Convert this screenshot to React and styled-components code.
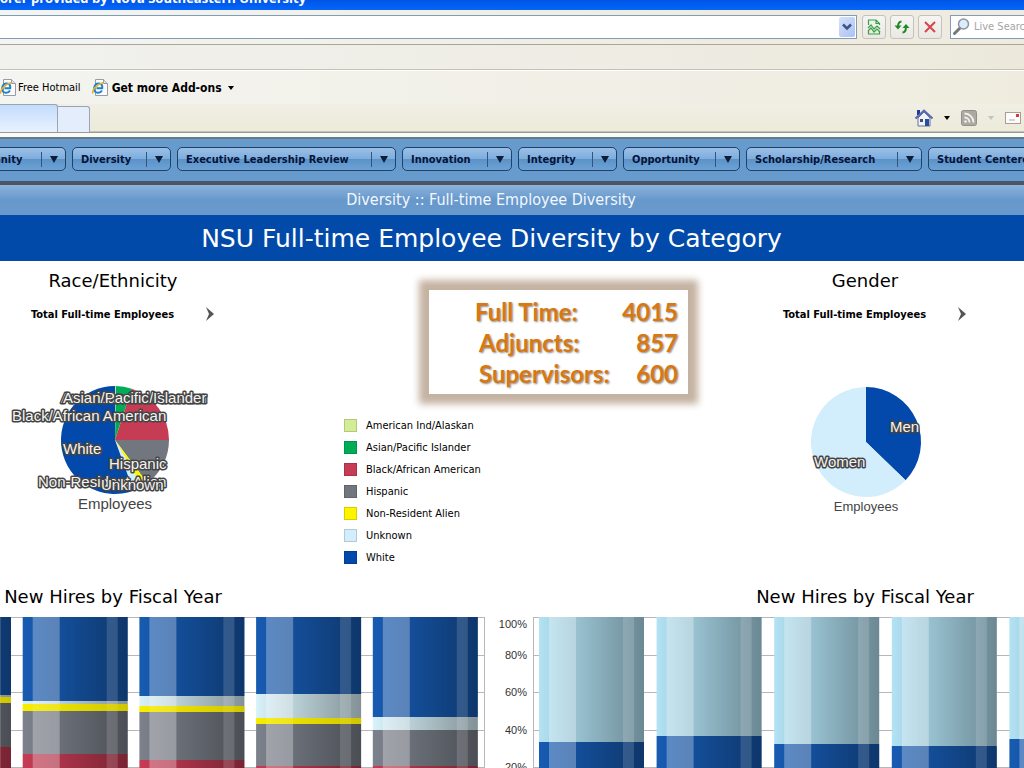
import React from 'react';
import styled, { createGlobalStyle } from 'styled-components';

const menuItems = [
    { label: 'Community', width: 116 },
    { label: 'Diversity', width: 99 },
    { label: 'Executive Leadership Review', width: 219 },
    { label: 'Innovation', width: 110 },
    { label: 'Integrity', width: 99 },
    { label: 'Opportunity', width: 117 },
    { label: 'Scholarship/Research', width: 176 },
    { label: 'Student Centered', width: 150 },
];

const totals = [
    { label: 'Full Time:', value: 4015, indent: 46 },
    { label: 'Adjuncts:', value: 857, indent: 50 },
    { label: 'Supervisors:', value: 600, indent: 50 },
];

const colors = {
    native: '#d3ec96',
    asian: '#00ad56',
    black: '#c63c55',
    hispanic: '#71767f',
    alien: '#fdf500',
    unknown: '#d2edfc',
    white: '#0249ab',
};

const legendItems = [
    { label: 'American Ind/Alaskan', color: colors.native },
    { label: 'Asian/Pacific Islander', color: colors.asian },
    { label: 'Black/African American', color: colors.black },
    { label: 'Hispanic', color: colors.hispanic },
    { label: 'Non-Resident Alien', color: colors.alien },
    { label: 'Unknown', color: colors.unknown },
    { label: 'White', color: colors.white },
];

const raceSlices = [
    { from: 0, to: 1, color: colors.native },
    { from: 1, to: 18, color: colors.asian },
    { from: 18, to: 90, color: colors.black },
    { from: 90, to: 143, color: colors.hispanic },
    { from: 143, to: 150, color: colors.alien },
    { from: 150, to: 160, color: colors.unknown },
    { from: 160, to: 360, color: colors.white },
];

const raceLabels = [
    { text: 'American Ind/Alaskan', x: 61, y: 23 },
    { text: 'Asian/Pacific Islander', x: 63, y: 23 },
    { text: 'Black/African American', x: 12, y: 41 },
    { text: 'Hispanic', x: 109, y: 89 },
    { text: 'Non-Resident Alien', x: 38, y: 107 },
    { text: 'Unknown', x: 101, y: 110 },
    { text: 'White', x: 63, y: 74 },
];

const genderSlices = [
    { from: 0, to: 134, color: colors.white },
    { from: 134, to: 360, color: colors.unknown },
];

const genderLabels = [
    { text: 'Men', x: 138, y: 52 },
    { text: 'Women', x: 62, y: 87 },
];

// each bar lists its segments from the top down: [colour, lower edge]
const raceBars = [
    [['white', 78], ['unknown', 80], ['alien', 86], ['hispanic', 130], ['black', 187]],
    [['white', 84], ['unknown', 87], ['alien', 94], ['hispanic', 137], ['black', 187]],
    [['white', 79], ['unknown', 89], ['alien', 95], ['hispanic', 143], ['black', 187]],
    [['white', 77], ['unknown', 101], ['alien', 107], ['hispanic', 149], ['black', 187]],
    [['white', 100], ['unknown', 113], ['hispanic', 149], ['black', 187]],
];

const genderBars = [
    [['women', 125], ['white', 187]],
    [['women', 119], ['white', 187]],
    [['women', 127], ['white', 187]],
    [['women', 129], ['white', 187]],
    [['women', 122], ['white', 187]],
];

const barColors = { ...colors, white: '#175bb2', unknown: '#d8f2fa', women: '#b2e2f4', hispanic: '#7c818b' };

const slicePath = (cx, cy, r, from, to) => {
    const point = (deg) => {
        const a = ((deg - 90) * Math.PI) / 180;
        return `${cx + r * Math.cos(a)} ${cy + r * Math.sin(a)}`;
    };
    return `M${cx} ${cy} L${point(from)} A${r} ${r} 0 ${to - from > 180 ? 1 : 0} 1 ${point(to)} Z`;
};

const Pie = ({ cx, cy, r, slices, labels, caption, captionSize, captionY }) => (
    <PieSvg viewBox="0 0 226 135" role="img" aria-label={caption}>
        {slices.map((s) => (
            <path key={s.from} d={slicePath(cx, cy, r, s.from, s.to)} fill={s.color} />
        ))}
        {labels.map((l) => (
            <PieLabel key={l.text} x={l.x} y={l.y}>{l.text}</PieLabel>
        ))}
        <PieCaption x={cx} y={captionY} $size={captionSize}>{caption}</PieCaption>
    </PieSvg>
);

const Bars = ({ bars, start, step }) => (
    <>
        {bars.map((segments, i) => {
            const x = start + i * step;
            const blocks = segments.map(([name, bottom], j) => {
                const top = j === 0 ? 0 : segments[j - 1][1];
                return { name, top, height: bottom - top };
            });
            const alien = blocks.find((b) => b.name === 'alien');
            return (
                <g key={i}>
                    {blocks.map((b) => (
                        <rect key={b.name} x={x} y={b.top} width="105" height={b.height} fill={barColors[b.name]} />
                    ))}
                    <rect x={x} y="0" width="105" height="187" fill="url(#shade)" />
                    <rect x={x + 10} y="0" width="27" height="187" fill="#fff" opacity="0.3" />
                    <rect x={x + 84} y="0" width="11" height="187" fill="#fff" opacity="0.15" />
                    {alien && <rect x={x} y={alien.top} width="105" height={alien.height} fill="#f5e800" opacity="0.6" />}
                </g>
            );
        })}
    </>
);

const gridLines = [0, 38, 75, 113, 150, 187];

const PageIcon = () => (
    <svg width="16" height="17" viewBox="0 0 16 17">
        <path d="M3.500 .5h8l4 4v12h-12z" fill="#fbfbfd" stroke="#9a9aa4" />
        <path d="M11.500 .5v4h4" fill="#dcdce4" stroke="#9a9aa4" />
        <path d="M10 11.500c-1 1.700-2.500 2.500-4.500 2.300C3 13.500 1.800 11.600 2.200 9 2.600 6.300 4.600 4.400 7 4.500c2.500.1 3.700 2 3.200 4.800H4.500" fill="none" stroke="#1d83c8" strokeWidth="2" />
        <path d="M1 14.500C-.6 12 4 5.500 11.500 3.500" fill="none" stroke="#e5b12d" strokeWidth="1.500" />
    </svg>
);

const NextArrow = () => (
    <svg width="8" height="14" viewBox="0 0 8 14"><path d="M0 0l8 7-8 7 3-7z" fill="#555" /></svg>
);

const App = () => {
    return (
        <Page>
            <GlobalStyle />
            <TitleBar>orer provided by Nova Southeastern University</TitleBar>
            <AddressRow>
                <AddressBox>
                    <AddressInput aria-label="Address" />
                    <DropButton aria-label="Show addresses">
                        <svg width="10" height="8" viewBox="0 0 10 8"><path d="M1 1.500l4 4 4-4" fill="none" stroke="#40547c" strokeWidth="2.500" /></svg>
                    </DropButton>
                </AddressBox>
                <ToolButton aria-label="Compatibility view">
                    <svg width="14" height="16" viewBox="0 0 14 16" fill="none" stroke="#36a045" strokeWidth="1.200">
                        <path d="M1.500 6V1h7.500l3.500 3.500V6M9 1v3.500h3.500M1.500 12v3h11v-3" />
                        <path d="M1 9l3-3 3 4 3-3 3 3M1 12l3-3 3 4 3-3 3 3" />
                    </svg>
                </ToolButton>
                <ToolButton aria-label="Refresh">
                    <svg width="16" height="14" viewBox="0 0 16 14" fill="none" stroke="#1e8a25" strokeWidth="2">
                        <path d="M7.500 1.500C5 1.500 4 3 4 7M8.500 12.500c2.500 0 3.500-2 3.500-6" />
                        <path d="M.5 5.500h7L4 9.500zM8.500 8h7L12 4z" fill="#1e8a25" stroke="none" />
                    </svg>
                </ToolButton>
                <ToolButton aria-label="Stop">
                    <svg width="12" height="12" viewBox="0 0 12 12"><path d="M1 1l10 10M11 1L1 11" stroke="#d9434b" strokeWidth="2" /></svg>
                </ToolButton>
                <SearchBox>
                    <svg width="17" height="17" viewBox="0 0 17 17">
                        <path d="M7 10L1.500 15.500" stroke="#777" strokeWidth="3" strokeLinecap="round" />
                        <circle cx="10.500" cy="6" r="5" fill="#dcecf8" stroke="#8c93a3" strokeWidth="1.500" />
                    </svg>
                    <SearchInput aria-label="Live Search" placeholder="Live Search" />
                </SearchBox>
            </AddressRow>
            <MenuRow />
            <FavoritesRow>
                <Favorite href="#"><PageIcon />Free Hotmail</Favorite>
                <Favorite href="#" $bold><PageIcon />Get more Add-ons<Caret /></Favorite>
            </FavoritesRow>
            <TabRow>
                <Tab $active aria-label="Current tab" />
                <Tab aria-label="New tab" />
                <PageTools>
                    <IconButton aria-label="Home">
                        <svg width="18" height="18" viewBox="0 0 18 18">
                            <path d="M3 9v8h12V9L9 3z" fill="#eef2fa" stroke="#65729a" />
                            <path d="M2 1h3v5H2z" fill="#2736a8" />
                            <path d="M.5 9.500L9 1.500l8.500 8" fill="none" stroke="#596ba8" strokeWidth="2" />
                            <path d="M5 10h3v3H5z" fill="#4a4f60" />
                            <path d="M10 10h4v7h-4z" fill="#244f9b" />
                        </svg>
                    </IconButton>
                    <Caret />
                    <IconButton aria-label="Feeds">
                        <svg width="16" height="16" viewBox="0 0 16 16">
                            <rect x=".5" y=".5" width="15" height="15" rx="2" fill="#aaa9a2" stroke="#908f88" />
                            <path d="M3.500 3.500a9 9 0 0 1 9 9M3.500 7.500a5 5 0 0 1 5 5" fill="none" stroke="#f2f1ea" strokeWidth="1.800" />
                            <circle cx="4.500" cy="11.500" r="1.300" fill="#f2f1ea" />
                        </svg>
                    </IconButton>
                    <Caret $faded />
                    <IconButton aria-label="Read mail">
                        <svg width="16" height="12" viewBox="0 0 16 12">
                            <rect x=".5" y=".5" width="15" height="11" fill="#fdfcfa" stroke="#b09a94" />
                            <path d="M11 2h3v3h-3z" fill="#d8383d" />
                            <path d="M4 8h6" stroke="#a9a9b0" />
                        </svg>
                    </IconButton>
                </PageTools>
            </TabRow>
            <Nav>
                {menuItems.map((item) => (
                    <NavButton key={item.label} $width={item.width}>
                        <NavLabel>{item.label}</NavLabel>
                        <NavArrow>
                            <svg width="8" height="7" viewBox="0 0 8 7"><path d="M0 0h8L4 7z" fill="#0d1c38" /></svg>
                        </NavArrow>
                    </NavButton>
                ))}
            </Nav>
            <Breadcrumb>Diversity :: Full-time Employee Diversity</Breadcrumb>
            <PageTitle>NSU Full-time Employee Diversity by Category</PageTitle>
            <Summary>
                <Section>
                    <SectionTitle>Race/Ethnicity</SectionTitle>
                    <Filter>
                        Total Full-time Employees
                        <NextArrow />
                    </Filter>
                    <Pie cx={115} cy={60} r={54} slices={raceSlices} labels={raceLabels} caption="Employees" captionSize={15} captionY={129} />
                    <ChartTitle>New Hires by Fiscal Year</ChartTitle>
                </Section>
                <Middle>
                    <TotalsBox>
                        {totals.map((t) => (
                            <TotalRow key={t.label} $indent={t.indent}>
                                <span>{t.label}</span>
                                <span>{t.value}</span>
                            </TotalRow>
                        ))}
                    </TotalsBox>
                    <Legend>
                        {legendItems.map((item) => (
                            <LegendItem key={item.label}>
                                <Swatch $color={item.color} />
                                {item.label}
                            </LegendItem>
                        ))}
                    </Legend>
                </Middle>
                <Section>
                    <SectionTitle>Gender</SectionTitle>
                    <Filter>
                        Total Full-time Employees
                        <NextArrow />
                    </Filter>
                    <Pie cx={114} cy={62} r={55} slices={genderSlices} labels={genderLabels} caption="Employees" captionSize={13} captionY={131} />
                    <ChartTitle>New Hires by Fiscal Year</ChartTitle>
                </Section>
            </Summary>
            <Charts>
                <ChartSvg viewBox="0 0 485 188" role="img" aria-label="New hires by race">
                    <defs>
                        <linearGradient id="shade">
                            <stop offset="0" stopColor="#000" stopOpacity="0" />
                            <stop offset="0.35" stopColor="#000" stopOpacity="0.14" />
                            <stop offset="1" stopColor="#000" stopOpacity="0.4" />
                        </linearGradient>
                    </defs>
                    {gridLines.map((y) => <GridLine key={y} x1="0" x2="484" y1={y + 0.5} y2={y + 0.5} />)}
                    <GridLine x1="484.5" x2="484.5" y1="0" y2="188" />
                    <Bars bars={raceBars} start={-94} step={116.7} />
                </ChartSvg>
                <ChartSvg viewBox="0 0 539 188" role="img" aria-label="New hires by gender">
                    {gridLines.map((y) => <GridLine key={y} x1="48" x2="539" y1={y + 0.5} y2={y + 0.5} />)}
                    <GridLine x1="48.5" x2="48.5" y1="0" y2="188" />
                    <AxisLabel x="42" y="11">100%</AxisLabel>
                    <AxisLabel x="42" y="42">80%</AxisLabel>
                    <AxisLabel x="42" y="79">60%</AxisLabel>
                    <AxisLabel x="42" y="117">40%</AxisLabel>
                    <AxisLabel x="42" y="154">20%</AxisLabel>
                    <Bars bars={genderBars} start={54} step={117.6} />
                </ChartSvg>
            </Charts>
        </Page>
    );
};

export default App;

const GlobalStyle = createGlobalStyle`
    * {
        box-sizing: border-box;
    }
    body {
        margin: 0;
        background: #fff;
        font-family: "DejaVu Sans Condensed", "DejaVu Sans", sans-serif;
    }
    button, input {
        font-family: inherit;
    }
`;

const Page = styled.div`
    height: 100vh;
    overflow: hidden;
    display: flex;
    flex-direction: column;
    background: #fff;

    > * {
        flex-shrink: 0;
    }
`;

const TitleBar = styled.div`
    height: 10px;
    display: flex;
    align-items: flex-end;
    overflow: hidden;
    background: linear-gradient(#0055e5, #0366fa);
    color: #fff;
    font-family: "Open Sans", sans-serif;
    font-size: 13px;
    font-weight: 700;
    line-height: 24px;
    white-space: nowrap;
`;

const AddressRow = styled.div`
    height: 35px;
    display: flex;
    align-items: center;
    gap: 4px;
    padding-bottom: 1px;
    background: linear-gradient(to right, #f4f4f2, #efecdf 70%);
    border-bottom: 1px solid #a9a597;
`;

const AddressBox = styled.div`
    flex: 1;
    height: 24px;
    display: flex;
    margin-right: 1px;
    padding: 1px;
    background: #fff;
    border: 1px solid #7f9db9;
    border-left: none;
`;

const AddressInput = styled.input`
    flex: 1;
    min-width: 0;
    border: none;
    outline: none;
`;

const DropButton = styled.button`
    width: 16px;
    padding: 0;
    border: none;
    border-radius: 2px;
    background: linear-gradient(135deg, #d5e2fd, #aac1f3);
`;

const ToolButton = styled.button`
    width: 24px;
    height: 24px;
    display: flex;
    align-items: center;
    justify-content: center;
    padding: 0;
    background: linear-gradient(#f6f5f3, #eae8e2);
    border: 1px solid #c2c1c4;
    border-radius: 3px;
`;

const SearchBox = styled.div`
    width: 74px;
    height: 24px;
    display: flex;
    align-items: center;
    gap: 4px;
    margin-left: 4px;
    padding-left: 2px;
    overflow: hidden;
    background: #fff;
    border: 1px solid #7f9db9;
    border-right: none;

    svg {
        flex-shrink: 0;
    }
`;

const SearchInput = styled.input`
    width: 100px;
    flex-shrink: 0;
    padding: 0;
    border: none;
    outline: none;
    font-size: 11px;

    &::placeholder {
        color: #a5a5a5;
        opacity: 1;
    }
`;

const MenuRow = styled.div`
    height: 25px;
    background: linear-gradient(to right, #f1f1ee, #ece9dc);
    border-bottom: 1px solid #c4c2b8;
`;

const FavoritesRow = styled.div`
    height: 34px;
    display: flex;
    align-items: center;
    gap: 11px;
    background: linear-gradient(to right, #f4f4f0, #efecdf);
    border-top: 1px solid #fff;
`;

const Favorite = styled.a`
    display: flex;
    align-items: center;
    gap: ${(props) => (props.$bold ? '4px' : '2px')};
    color: #000;
    font-size: ${(props) => (props.$bold ? '12px' : '11px')};
    font-weight: ${(props) => (props.$bold ? 700 : 400)};
    text-decoration: none;
    white-space: nowrap;
`;

const Caret = styled.span`
    width: 0;
    margin: 0 2px;
    border: 3px solid transparent;
    border-top: 4px solid ${(props) => (props.$faded ? '#c5c3b8' : '#000')};
    border-bottom: none;
`;

const TabRow = styled.div`
    height: 33px;
    display: flex;
    align-items: flex-end;
    padding-bottom: 5px;
    background: linear-gradient(#f1efe5, #ecead9 27px, #9b9b94 28px, #9b9b94 29px, #fafaf6 29px);
`;

const Tab = styled.button`
    width: ${(props) => (props.$active ? '58px' : '32px')};
    height: ${(props) => (props.$active ? '28px' : '26px')};
    background: ${(props) => (props.$active ? 'linear-gradient(#c3dcfc, #e9f2fe)' : '#e3edfb')};
    border: 1px solid #9aa5b4;
    border-bottom: none;
    border-left: none;
    border-radius: 0 3px 0 0;
`;

const PageTools = styled.div`
    display: flex;
    align-items: center;
    gap: 9px;
    margin-left: auto;
    padding: 0 3px 5px 0;
`;

const IconButton = styled.button`
    display: flex;
    padding: 0;
    border: none;
    background: none;
`;

const Nav = styled.nav`
    height: 48px;
    display: flex;
    align-items: center;
    gap: 6px;
    margin-left: -50px;
    padding-bottom: 2px;
    overflow: hidden;
    background: #679acd;
    border-top: 2px solid #667986;
    border-bottom: 4px solid #4c5563;
`;

const NavButton = styled.button`
    width: ${(props) => props.$width}px;
    height: 24px;
    flex-shrink: 0;
    display: flex;
    align-items: center;
    justify-content: space-between;
    padding: 0 7px 0 8px;
    background: linear-gradient(#9bbfe6, #7eaedd 48%, #5b93c8 52%, #6ea2d5);
    border: 1px solid #1f4268;
    border-radius: 5px;
    color: #06123a;
`;

const NavLabel = styled.span`
    font-size: 11px;
    font-weight: 700;
    white-space: nowrap;
`;

const NavArrow = styled.span`
    height: 15px;
    display: flex;
    align-items: center;
    padding-left: 8px;
    border-left: 1px solid #2f5680;
`;

const Breadcrumb = styled.div`
    height: 30px;
    padding-right: 42px;
    background: linear-gradient(#8cb3dc, #6798cc 50%, #6a9acc);
    color: #f3f8fd;
    font-size: 16px;
    line-height: 30px;
    text-align: center;
`;

const PageTitle = styled.h1`
    height: 46px;
    margin: 0;
    padding-right: 41px;
    background: #014aa9;
    color: #fff;
    font-family: "DejaVu Sans", sans-serif;
    font-size: 25px;
    font-weight: 400;
    line-height: 48px;
    text-align: center;
`;

const Summary = styled.div`
    display: grid;
    grid-template-columns: 226fr 480fr 318fr;
`;

const Section = styled.section`
    display: flex;
    flex-direction: column;
    align-items: center;
    padding-top: 9px;
`;

const SectionTitle = styled.h2`
    margin: 0;
    font-family: "DejaVu Sans", sans-serif;
    font-size: 18px;
    font-weight: 400;
    line-height: 22px;
`;

const Filter = styled.button`
    height: 24px;
    display: flex;
    align-items: center;
    gap: 32px;
    margin: 10px 0 54px 19px;
    padding: 0;
    border: none;
    background: none;
    color: #000;
    font-size: 11px;
    font-weight: 700;
    white-space: nowrap;
`;

const PieSvg = styled.svg`
    width: 226px;
    height: 135px;
`;

const PieLabel = styled.text`
    fill: #f4f4f4;
    stroke: #444;
    stroke-width: 3px;
    stroke-linejoin: round;
    paint-order: stroke;
    font-family: "Liberation Sans", Arial, sans-serif;
    font-size: 15px;
`;

const PieCaption = styled.text`
    fill: #444;
    font-family: "Liberation Sans", Arial, sans-serif;
    font-size: ${(props) => props.$size}px;
    text-anchor: middle;
`;

const ChartTitle = styled.h2`
    margin: 71px 0 9px;
    font-family: "DejaVu Sans", sans-serif;
    font-size: 18px;
    font-weight: 400;
    line-height: 22px;
    white-space: nowrap;
`;

const Middle = styled.div`
    display: flex;
    flex-direction: column;
    align-items: flex-start;
    padding-top: 29px;
`;

const TotalsBox = styled.div`
    width: 259px;
    margin-left: 203px;
    padding: 6px 10px 5px 0;
    background: #fff;
    box-shadow: 0 0 7px 10px #c5b3a2;
`;

const TotalRow = styled.div`
    display: flex;
    justify-content: space-between;
    padding-left: ${(props) => props.$indent}px;
    color: #d8780f;
    font-family: Lato, "Open Sans", sans-serif;
    font-size: 24px;
    font-weight: 700;
    line-height: 31px;
    text-shadow: 1px 1px 2px #888;
`;

const Legend = styled.ul`
    margin: 20px 0 0 118px;
    padding: 0;
    list-style: none;
`;

const LegendItem = styled.li`
    height: 22px;
    display: flex;
    align-items: center;
    gap: 9px;
    font-size: 11px;
`;

const Swatch = styled.span`
    width: 13px;
    height: 13px;
    background: ${(props) => props.$color};
    border: 1px solid rgba(0, 0, 0, 0.15);
`;

const Charts = styled.div`
    display: grid;
    grid-template-columns: 485fr 539fr;
`;

const ChartSvg = styled.svg`
    width: 100%;
    display: block;
`;

const GridLine = styled.line`
    stroke: #b9b6bb;
`;

const AxisLabel = styled.text`
    fill: #333;
    font-family: "Liberation Sans", Arial, sans-serif;
    font-size: 11px;
    text-anchor: end;
`;
